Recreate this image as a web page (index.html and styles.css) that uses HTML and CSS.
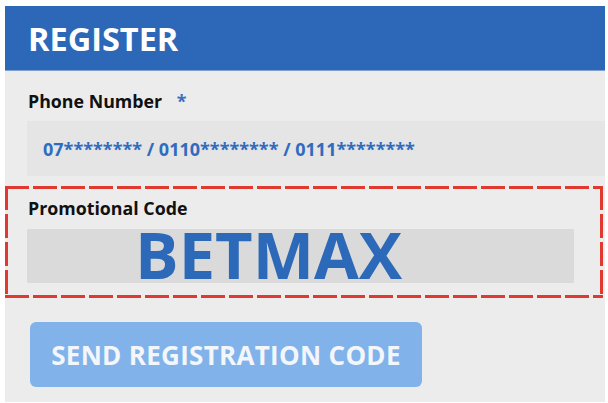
FILE: index.html
```html
<!DOCTYPE html>
<html lang="en">
<head>
<meta charset="utf-8">
<title>Register</title>
<link rel="stylesheet" href="styles.css">
</head>
<body>
<div class="panel">
  <div class="header"><h1 class="title">REGISTER</h1></div>
  <div class="content">
    <div class="label">Phone Number <span class="req">*</span></div>
    <div class="phone-input">07******** / 0110******** / 0111********</div>
    <div class="promo">
      <div class="label promo-label">Promotional Code</div>
      <div class="promo-input">BETMAX</div>
    </div>
    <button class="send" type="button">SEND REGISTRATION CODE</button>
  </div>
</div>
</body>
</html>
```

FILE: styles.css
```css
html, body {
  margin: 0;
  padding: 0;
  background: #ffffff;
}
body {
  font-family: "Open Sans", "Liberation Sans", sans-serif;
  width: 608px;
  height: 403px;
  overflow: hidden;
}
.panel {
  margin: 6px 0 0 5px;
  width: 600px;
  height: 396px;
  background: #ececec;
}
.header {
  height: 64px;
  background: #2c67b8;
  border-bottom: 1px solid #7fa0cf;
  display: flex;
  align-items: center;
  padding-left: 23px;
}
.title {
  margin: 0;
  font-size: 32.5px;
  font-weight: 700;
  color: #ffffff;
}
.content {
  padding-top: 18px;
}
.label {
  font-size: 17.8px;
  line-height: 24px;
  font-weight: 700;
  color: #111111;
  padding-left: 23px;
}
.req {
  color: #3a6fc0;
  margin-left: 10px;
}
.phone-input {
  margin-top: 8px;
  margin-left: 22px;
  height: 55px;
  background: #e5e5e5;
  display: flex;
  align-items: center;
  padding-left: 16px;
  font-size: 18px;
  font-weight: 700;
  color: #2f6cc0;
}
.promo {
  margin-top: 10px;
  width: 592px;
  height: 105px;
  padding: 7px 3px 0 3px;
  background:
    repeating-linear-gradient(90deg, #e03a30 0 24px, transparent 24px 28px) left top / 100% 3px no-repeat,
    repeating-linear-gradient(90deg, #e03a30 0 24px, transparent 24px 28px) left bottom / 100% 3px no-repeat,
    repeating-linear-gradient(180deg, #e03a30 0 24px, transparent 24px 28px) left top / 3px 100% no-repeat,
    repeating-linear-gradient(180deg, #e03a30 0 24px, transparent 24px 28px) right top / 3px 100% no-repeat;
}
.promo-label {
  padding-top: 3px;
  padding-left: 20px;
}
.promo-input {
  margin-top: 9px;
  margin-left: 19px;
  width: 547px;
  height: 54px;
  background: #dadada;
  font-size: 65px;
  line-height: 51px;
  font-weight: 700;
  color: #2d69b9;
  padding-left: 108px;
  box-sizing: border-box;
}
.send {
  display: block;
  margin: 24px 0 0 25px;
  width: 392px;
  height: 65px;
  border: 0;
  border-radius: 6px;
  background: #82b2ea;
  color: #f3f6fb;
  font-family: "Open Sans", "Liberation Sans", sans-serif;
  font-size: 26px;
  letter-spacing: 0.3px;
  font-weight: 700;
  padding: 0;
}
```
